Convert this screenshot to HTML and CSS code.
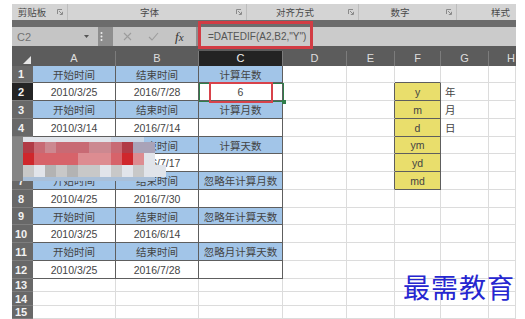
FILE: index.html
```html
<!DOCTYPE html>
<html lang="zh-CN">
<head>
  <meta charset="UTF-8" />
  <title>DATEDIF</title>
  <link rel="stylesheet" href="styles.css">
</head>
<body>
  <div class="app">
    <!-- ribbon group labels -->
    <div class="ribbon">
      <div class="grp g1"><span>剪贴板</span><i class="launch"><svg width="6" height="6" viewBox="0 0 6 6"><path d="M0.5 5V0.5H5" stroke="#8a8a8a" fill="none"/><path d="M2 2L5 5M5.5 2.8V5.5H2.8" stroke="#8a8a8a" fill="none"/></svg></i></div>
      <div class="grp g2"><span>字体</span><i class="launch"><svg width="6" height="6" viewBox="0 0 6 6"><path d="M0.5 5V0.5H5" stroke="#8a8a8a" fill="none"/><path d="M2 2L5 5M5.5 2.8V5.5H2.8" stroke="#8a8a8a" fill="none"/></svg></i></div>
      <div class="grp g3"><span>对齐方式</span><i class="launch"><svg width="6" height="6" viewBox="0 0 6 6"><path d="M0.5 5V0.5H5" stroke="#8a8a8a" fill="none"/><path d="M2 2L5 5M5.5 2.8V5.5H2.8" stroke="#8a8a8a" fill="none"/></svg></i></div>
      <div class="grp g4"><span>数字</span><i class="launch"><svg width="6" height="6" viewBox="0 0 6 6"><path d="M0.5 5V0.5H5" stroke="#8a8a8a" fill="none"/><path d="M2 2L5 5M5.5 2.8V5.5H2.8" stroke="#8a8a8a" fill="none"/></svg></i></div>
      <div class="grp g5"><span>样式</span></div>
    </div>
    <div class="band"></div>

    <!-- formula bar -->
    <div class="fbar">
      <div class="namebox">
        <span>C2</span>
        <svg width="5" height="3" viewBox="0 0 5 3"><path d="M0 0H5L2.5 3Z" fill="#555"/></svg>
      </div>
      <div class="dots"><svg width="3" height="9" viewBox="0 0 3 9"><circle cx="1.5" cy="1" r="1" fill="#ececec"/><circle cx="1.5" cy="4.5" r="1" fill="#ececec"/><circle cx="1.5" cy="8" r="1" fill="#ececec"/></svg></div>
      <div class="fbtns">
        <svg width="9" height="9" viewBox="0 0 9 9"><path d="M1 1L8 8M8 1L1 8" stroke="#9c9c9c" stroke-width="1.1"/></svg>
        <svg width="11" height="9" viewBox="0 0 11 9"><path d="M1 5L4 8L10 1" stroke="#9c9c9c" stroke-width="1.1" fill="none"/></svg>
        <span class="fx"><i>f</i>x</span>
      </div>
      <div class="finput">=DATEDIF(A2,B2,"Y")</div>
    </div>

    <!-- worksheet -->
    <div class="sheet">
      <div class="corner"><svg width="8" height="8" viewBox="0 0 8 8"><path d="M8 0V8H0Z" fill="#e6e6e6"/></svg></div>
      <div class="ch">A</div><div class="ch">B</div><div class="ch sel">C</div><div class="ch">D</div><div class="ch">E</div><div class="ch">F</div><div class="ch">G</div><div class="ch ch-h">H</div>

      <div class="rh">1</div><div class="c t">开始时间</div><div class="c t">结束时间</div><div class="c t">计算年数</div><div class="c"></div><div class="c"></div><div class="c yt"></div><div class="c"></div><div class="c"></div>
      <div class="rh sel">2</div><div class="c d">2010/3/25</div><div class="c d">2016/7/28</div><div class="c d">6</div><div class="c"></div><div class="c yl"></div><div class="c y">y</div><div class="c g">年</div><div class="c"></div>
      <div class="rh">3</div><div class="c t">开始时间</div><div class="c t">结束时间</div><div class="c t">计算月数</div><div class="c"></div><div class="c yl"></div><div class="c y">m</div><div class="c g">月</div><div class="c"></div>
      <div class="rh">4</div><div class="c d">2010/3/14</div><div class="c d">2016/7/14</div><div class="c d"></div><div class="c"></div><div class="c yl"></div><div class="c y">d</div><div class="c g">日</div><div class="c"></div>
      <div class="rh">5</div><div class="c t">开始时间</div><div class="c t">结束时间</div><div class="c t">计算天数</div><div class="c"></div><div class="c yl"></div><div class="c y">ym</div><div class="c"></div><div class="c"></div>
      <div class="rh">6</div><div class="c d">2010/3/25</div><div class="c d">2016/7/17</div><div class="c d"></div><div class="c"></div><div class="c yl"></div><div class="c y">yd</div><div class="c"></div><div class="c"></div>
      <div class="rh">7</div><div class="c t">开始时间</div><div class="c t">结束时间</div><div class="c t">忽略年计算月数</div><div class="c"></div><div class="c yl"></div><div class="c y">md</div><div class="c"></div><div class="c"></div>
      <div class="rh">8</div><div class="c d">2010/4/25</div><div class="c d">2016/7/30</div><div class="c d"></div><div class="c"></div><div class="c"></div><div class="c"></div><div class="c"></div><div class="c"></div>
      <div class="rh">9</div><div class="c t">开始时间</div><div class="c t">结束时间</div><div class="c t">忽略年计算天数</div><div class="c"></div><div class="c"></div><div class="c"></div><div class="c"></div><div class="c"></div>
      <div class="rh">10</div><div class="c d">2010/3/25</div><div class="c d">2016/6/14</div><div class="c d"></div><div class="c"></div><div class="c"></div><div class="c"></div><div class="c"></div><div class="c"></div>
      <div class="rh">11</div><div class="c t">开始时间</div><div class="c t">结束时间</div><div class="c t">忽略月计算天数</div><div class="c"></div><div class="c"></div><div class="c"></div><div class="c"></div><div class="c"></div>
      <div class="rh">12</div><div class="c d">2010/3/25</div><div class="c d">2016/7/28</div><div class="c d"></div><div class="c"></div><div class="c"></div><div class="c"></div><div class="c"></div><div class="c"></div>
      <div class="rh">13</div><div class="c"></div><div class="c"></div><div class="c"></div><div class="c"></div><div class="c"></div><div class="c"></div><div class="c"></div><div class="c"></div>
      <div class="rh">14</div><div class="c"></div><div class="c"></div><div class="c"></div><div class="c"></div><div class="c"></div><div class="c"></div><div class="c"></div><div class="c"></div>
      <div class="rh">15</div><div class="c"></div><div class="c"></div><div class="c"></div><div class="c"></div><div class="c"></div><div class="c"></div><div class="c"></div><div class="c"></div>
    </div>

    <!-- overlays -->
    <div class="mark-formula"></div>
    <div class="cursor-cell"><i class="handle"></i></div>
    <div class="mark-cell"></div>

    <div class="mosaic">
      <i class="k1"></i><i class="k2"></i><i class="k2"></i><i class="k2"></i><i class="k2"></i><i class="k2"></i><i class="k2"></i><i class="k2"></i><i class="k2"></i><i class="k3"></i><i class="k3"></i><i class="k3"></i><i></i><i></i>
      <i class="k1"></i><i class="k4"></i><i class="k5"></i><i class="k6"></i><i class="k5"></i><i class="k5"></i><i class="k5"></i><i class="k6"></i><i class="k6"></i><i class="k5"></i><i class="k4"></i><i class="k12"></i><i class="k12"></i><i></i>
      <i class="k1"></i><i class="k7"></i><i class="k8"></i><i class="k8"></i><i class="k8"></i><i class="k8"></i><i class="k9"></i><i class="k9"></i><i class="k9"></i><i class="k8"></i><i class="k7"></i><i class="k9"></i><i class="k2"></i><i></i>
      <i class="k1"></i><i class="k10"></i><i class="k2"></i><i class="k11"></i><i class="k10"></i><i class="k11"></i><i class="k10"></i><i class="k10"></i><i class="k2"></i><i class="k10"></i><i class="k2"></i><i class="k10"></i><i class="k2"></i><i class="k2"></i>
      <i class="k1"></i><i class="k13"></i><i class="k13"></i><i class="k13"></i><i class="k13"></i><i class="k13"></i><i class="k13"></i><i class="k13"></i><i class="k13"></i><i class="k13"></i><i class="k13"></i><i class="k13"></i><i class="k13"></i><i></i>
    </div>

    <div class="watermark">最需教育</div>
  </div>
</body>
</html>
```

FILE: styles.css
```css
* { box-sizing: border-box; }

body {
  margin: 0;
  background: #fff;
  font-family: "Liberation Sans", "Noto Sans CJK SC", sans-serif;
}

.app {
  position: relative;
  width: 504px;
  margin: 4px 0 0 12px;
  overflow: hidden;
}

/* ribbon */
.ribbon {
  display: flex;
  height: 16px;
  background: #d4d4d4;
  overflow: hidden;
  font-size: 9.5px;
  color: #4a4a4a;
}
.grp {
  flex: none;
  display: flex;
  align-items: center;
  border-right: 1px solid #bdbdbd;
}
.grp span { flex: 1; text-align: center; }
.launch { width: 15px; display: flex; justify-content: center; }
.g1 { width: 56px; }
.g2 { width: 179px; }
.g3 { width: 112px; }
.g4 { width: 98px; }
.g5 { width: 59px; border-right: none; }
.g5 span { text-align: right; padding-right: 6px; }

.band { height: 7px; background: #6c6c6c; }

/* formula bar */
.fbar {
  display: flex;
  height: 19px;
  background: #8e8e8e;
}
.namebox {
  width: 86px;
  background: #c5c5c5;
  display: flex;
  align-items: center;
  justify-content: space-between;
  padding: 0 9px 0 5px;
  font-size: 11px;
  color: #727272;
}
.dots {
  width: 15px;
  display: flex;
  align-items: center;
  padding-left: 2px;
}
.fbtns {
  width: 83px;
  margin-right: 3px;
  background: #c5c5c5;
  display: flex;
  align-items: center;
  gap: 16px;
  padding-left: 10px;
}
.fx {
  font-family: "Liberation Serif", serif;
  font-style: italic;
  font-size: 11px;
  color: #333;
}
.fx i { font-size: 13px; }
.finput {
  flex: 1;
  background: #cbcbcb;
  padding-left: 9px;
  font-size: 10px;
  line-height: 19px;
  color: #555;
}

/* worksheet */
.sheet {
  display: grid;
  grid-template-columns: 21px 83px 83px 84px 64px 48px 46px 48px 27px;
  grid-template-rows: 15px 17px 18px 18px 18px 17px 18px 18px 18px 17px 18px 18px 18px 13px 14px 13px;
  border-top: 5px solid #5c5c5c;
  font-size: 10.5px;
  color: #444;
}
.corner {
  background: #5c5c5c;
  display: flex;
  align-items: flex-end;
  justify-content: flex-end;
  padding: 0 2px 2px 0;
}
.ch {
  background: #5c5c5c;
  color: #dedede;
  font-size: 11px;
  line-height: 15px;
  text-align: center;
  border-right: 1px solid #7c7c7c;
}
.ch.sel { background: #232323; color: #f0f0f0; }
.ch-h { text-align: left; padding-left: 18px; border-right: none; }
.rh {
  background: #686868;
  color: #f2f2f2;
  font-size: 11px;
  font-weight: bold;
  padding-right: 3px;
  display: flex;
  align-items: center;
  justify-content: center;
  border-bottom: 1px solid #7e7e7e;
}
.rh.sel { background: #242424; }

.c {
  display: flex;
  align-items: center;
  justify-content: center;
  white-space: nowrap;
  border-right: 1px solid #dcdcdc;
  border-bottom: 1px solid #dcdcdc;
}
.c.t { background: #a2c5e8; border-color: #5e5e5e; }
.c.d { background: #fff; border-color: #5e5e5e; }
.c.y { background: #e9de6c; border-color: #5e5e5e; }
.c.yt { border-bottom-color: #5e5e5e; }
.c.yl { border-right-color: #5e5e5e; }
.c.g { justify-content: flex-start; padding-left: 4px; }

/* overlays */
.mark-formula {
  position: absolute;
  left: 186px;
  top: 17px;
  width: 115px;
  height: 28px;
  border: 3px solid #d23c44;
}
.cursor-cell {
  position: absolute;
  left: 187px;
  top: 79px;
  width: 85px;
  height: 19px;
  border: 1px solid #2f7d4a;
}
.handle {
  position: absolute;
  right: -3px;
  bottom: -3px;
  width: 4px;
  height: 4px;
  background: #2f7d4a;
}
.mark-cell {
  position: absolute;
  left: 197px;
  top: 78px;
  width: 64px;
  height: 21px;
  border: 2px solid #d8424a;
}

.mosaic {
  position: absolute;
  left: 0;
  top: 133px;
  display: grid;
  grid-template-columns: repeat(14, 11px);
  grid-template-rows: 5px 11px 12px 12px 4px;
}
.k1 { background: #858585; }
.k2 { background: #e1e4ea; }
.k3 { background: #cbd8e7; }
.k4 { background: #b13b46; }
.k5 { background: #c86a74; }
.k6 { background: #cc8890; }
.k7 { background: #cf272c; }
.k8 { background: #d7636a; }
.k9 { background: #dd8c91; }
.k10 { background: #c8c8c8; }
.k11 { background: #b3b3b3; }
.k12 { background: #a9a3b8; }
.k13 { background: #a9bfd8; }

.watermark {
  position: absolute;
  left: 391px;
  top: 268px;
  font-family: "Noto Sans CJK SC", sans-serif;
  font-size: 27px;
  line-height: 30px;
  letter-spacing: 1px;
  color: #2626d0;
}
```
